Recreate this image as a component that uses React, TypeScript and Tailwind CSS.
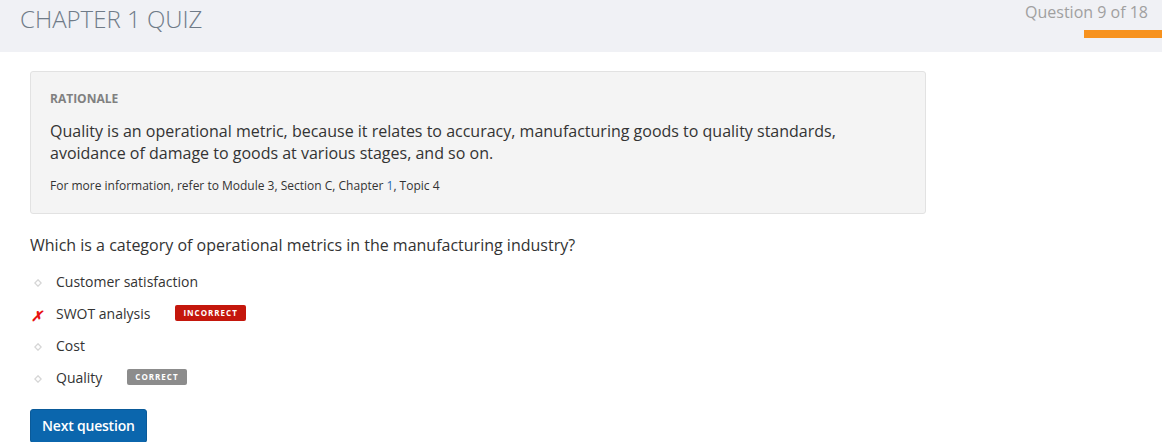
import React from "react";

const options = [
  { label: "Customer satisfaction", status: "" },
  { label: "SWOT analysis", status: "incorrect" },
  { label: "Cost", status: "" },
  { label: "Quality", status: "correct" },
];

function Bullet() {
  return (
    <svg width="8" height="8" viewBox="0 0 8 8" className="block">
      <path d="M4 0.8 L7.2 4 L4 7.2 L0.8 4 Z" fill="none" stroke="#d6d6d6" strokeWidth="1.3" />
    </svg>
  );
}

export default function App() {
  return (
    <div className="w-[1162px] h-[442px] overflow-hidden bg-white font-['Open_Sans',sans-serif]">
      {/* Header */}
      <div className="h-[52px] bg-[#f0f1f5] flex justify-between">
        <h1 className="pl-[20px] pt-[3px] text-[24px] leading-[32px] font-light text-[#6f7b88]">
          CHAPTER 1 QUIZ
        </h1>
        <div className="flex flex-col items-end">
          <div className="pr-[14px] pt-[1px] text-[16px] leading-[22px] text-[#a0a0a0]">Question 9 of 18</div>
          <div className="mt-[7px] w-[78px] h-[8px] bg-[#f7921e]" />
        </div>
      </div>

      <div className="px-[30px] pt-[19px]">
        {/* Rationale */}
        <div className="w-[896px] h-[143px] bg-[#f4f4f4] border border-[#e2e2e2] rounded-[3px] px-[19px] pt-[18px]">
          <div className="text-[12px] leading-[17px] font-bold text-[#808080]">RATIONALE</div>
          <p className="mt-[13px] text-[16px] leading-[22px] text-[#333]">
            Quality is an operational metric, because it relates to accuracy, manufacturing goods to quality standards,
            avoidance of damage to goods at various stages, and so on.
          </p>
          <p className="mt-[13px] text-[12px] leading-[17px] text-[#333]">
            For more information, refer to Module 3, Section C, Chapter <span className="text-[#2a6bb0]">1</span>, Topic 4
          </p>
        </div>

        {/* Question */}
        <div className="mt-[20px] text-[16px] leading-[22px] text-[#333]">
          Which is a category of operational metrics in the manufacturing industry?
        </div>

        <ul className="mt-[10px] flex flex-col">
          {options.map((o) => (
            <li key={o.label} className="h-[32px] flex items-center">
              <span className="w-[26px] flex items-center pl-[1px]">
                {o.status === "incorrect" ? (
                  <span className="text-[14px] leading-none font-bold italic text-[#e8130f] translate-y-[2px]">✗</span>
                ) : (
                  <span className="pl-[3px] translate-y-[1px]">
                    <Bullet />
                  </span>
                )}
              </span>
              <span className="text-[14px] leading-[20px] text-[#333]">{o.label}</span>
              {o.status === "incorrect" && (
                <span className="ml-[25px] -translate-y-[1px] h-[16px] px-[8px] flex items-center rounded-[2px] bg-[#c4170c] text-white text-[8px] font-bold tracking-[1px]">
                  INCORRECT
                </span>
              )}
              {o.status === "correct" && (
                <span className="ml-[25px] -translate-y-[1px] h-[16px] px-[8px] flex items-center rounded-[2px] bg-[#8c8c8c] text-white text-[8px] font-bold tracking-[1px]">
                  CORRECT
                </span>
              )}
            </li>
          ))}
        </ul>

        <button className="mt-[15px] h-[34px] px-[11px] rounded-[3px] bg-[#0b66ad] border border-[#0a5a99] text-white text-[14px] leading-[20px] font-semibold tracking-[-0.2px]">
          Next question
        </button>
      </div>
    </div>
  );
}
